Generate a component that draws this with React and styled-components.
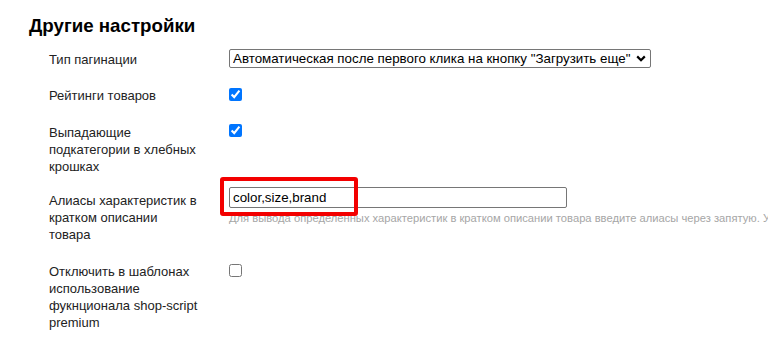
import React from "react";
import styled, { createGlobalStyle } from "styled-components";

const GlobalStyle = createGlobalStyle`
  html, body {
    margin: 0;
    padding: 0;
    background: #fff;
    overflow: hidden;
  }
  body {
    font-family: "Liberation Sans", Arial, sans-serif;
    color: #222;
  }
`;

const rows = [
  { label: "Тип пагинации", kind: "select", space: 0, labelTop: 2, fieldTop: 0 },
  { label: "Рейтинги товаров", kind: "check", checked: true, space: 19, labelTop: 0, fieldTop: 1 },
  { label: "Выпадающие подкатегории в хлебных крошках", kind: "check", checked: true, space: 20, labelTop: 0, fieldTop: 0 },
  { label: "Алиасы характеристик в кратком описании товара", kind: "aliases", space: 12, labelTop: 5, fieldTop: 0 },
  { label: "Отключить в шаблонах использование фукнционала shop-script premium", kind: "check", checked: false, space: 20, labelTop: 0, fieldTop: 1 },
];

function Field({ row }) {
  if (row.kind === "select") {
    return (
      <SelectWrap>
        <Select defaultValue="auto">
          <option value="auto">Автоматическая после первого клика на кнопку "Загрузить еще"</option>
        </Select>
        <Chevron width="10" height="7" viewBox="0 0 10 7">
          <path d="M1.2 1.4 L5 5.2 L8.8 1.4" fill="none" stroke="#000" strokeWidth="2.2" />
        </Chevron>
      </SelectWrap>
    );
  }
  if (row.kind === "aliases") {
    return (
      <div>
        <InputWrap>
          <TextInput defaultValue="color,size,brand" />
          <Highlight />
        </InputWrap>
        <Hint>Для вывода определенных характеристик в кратком описании товара введите алиасы через запятую. У</Hint>
      </div>
    );
  }
  return <Check type="checkbox" defaultChecked={row.checked} />;
}

export default function App() {
  return (
    <>
      <GlobalStyle />
      <Page>
        <Heading>Другие настройки</Heading>
        <Form>
          {rows.map((row) => (
            <Row key={row.label} $space={row.space}>
              <Label $top={row.labelTop}>{row.label}</Label>
              <Value $top={row.fieldTop}>
                <Field row={row} />
              </Value>
            </Row>
          ))}
        </Form>
      </Page>
    </>
  );
}

const Page = styled.div`
  padding: 15px 0 0 29px;
  width: 768px;
  box-sizing: border-box;
`;

const Heading = styled.h3`
  margin: 0;
  font-size: 18.72px;
  line-height: 21px;
  font-weight: bold;
  color: #000;
`;

const Form = styled.div`
  display: flex;
  flex-direction: column;
  margin-top: 13px;
  padding-left: 20px;
`;

const Row = styled.div`
  display: grid;
  grid-template-columns: 180px 1fr;
  align-items: start;
  margin-top: ${(p) => p.$space}px;
`;

const Label = styled.div`
  width: 153px;
  padding-top: ${(p) => p.$top}px;
  font-size: 13px;
  line-height: 17px;
  color: #222;
`;

const Value = styled.div`
  padding-top: ${(p) => p.$top}px;
  min-width: 0;
`;

const SelectWrap = styled.div`
  position: relative;
  width: 422px;
`;

const Select = styled.select`
  appearance: none;
  display: block;
  width: 422px;
  height: 19px;
  margin: 0;
  padding: 0 0 0 3px;
  border: 1px solid #767676;
  border-radius: 2px;
  background: #fff;
  font-family: "Liberation Sans", Arial, sans-serif;
  font-size: 13.33px;
  line-height: 17px;
  color: #000;
  box-sizing: border-box;
`;

const Chevron = styled.svg`
  position: absolute;
  right: 5px;
  top: 6px;
  pointer-events: none;
`;

const Check = styled.input`
  display: block;
  width: 13px;
  height: 13px;
  margin: 0;
`;

const InputWrap = styled.div`
  position: relative;
  width: 338px;
`;

const TextInput = styled.input`
  display: block;
  width: 338px;
  height: 21px;
  margin: 0;
  padding: 0 3px;
  border: 1px solid #767676;
  border-radius: 2px;
  font-family: "Liberation Sans", Arial, sans-serif;
  font-size: 13.33px;
  color: #000;
  box-sizing: border-box;
`;

const Highlight = styled.div`
  position: absolute;
  left: -9px;
  top: -10px;
  width: 138px;
  height: 39px;
  border: 4px solid #f30000;
  border-radius: 3px;
  box-sizing: border-box;
  pointer-events: none;
`;

const Hint = styled.div`
  margin-top: 4px;
  font-size: 11.2px;
  line-height: 13px;
  color: #a6a6a6;
  white-space: nowrap;
`;
